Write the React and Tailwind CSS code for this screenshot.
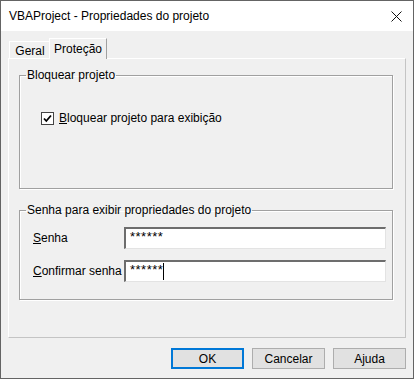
import React from 'react';

const font = { fontFamily: '"Liberation Sans", Arial, sans-serif' };

const Input = ({ value, caret }) => (
  <div className="w-[262px] h-[22px] bg-white border-t-2 border-l-2 border-t-[#6d6d6d] border-l-[#6d6d6d] border-r border-b border-r-[#e3e3e3] border-b-[#e3e3e3] flex items-start pl-[4px] pt-[1px]">
    <span className="text-[13px] leading-[13px] tracking-[0.5px] text-black">{value}</span>
    {caret && <span className="ml-[0px] w-px h-[17px] bg-black" />}
  </div>
);

const Button = ({ children, primary }) => (
  <button
    className={
      'w-[73px] h-[21px] bg-[#e1e1e1] text-[12px] text-black flex items-center justify-center ' +
      (primary ? 'border-2 border-[#0078d7]' : 'border border-[#adadad]')
    }
  >
    {children}
  </button>
);

export default function App() {
  return (
    <div
      className="w-[414px] h-[379px] border border-[#646464] bg-[#f0f0f0] flex flex-col text-[12px] text-black select-none"
      style={font}
    >
      {/* title bar */}
      <div className="h-[30px] bg-white flex items-center justify-between pl-[8px] pr-[11px] shrink-0">
        <span className="text-[12px]">VBAProject - Propriedades do projeto</span>
        <svg width="11" height="11" viewBox="0 0 11 11">
          <path d="M0.5 0.5 L10.5 10.5 M10.5 0.5 L0.5 10.5" stroke="#111" strokeWidth="1" />
        </svg>
      </div>

      {/* body */}
      <div className="flex-1 flex flex-col pl-[7px] pr-[7px] pt-[7px]">
        {/* tabs */}
        <div className="flex items-end h-[20px] pl-[1px] relative z-10">
          <div className="h-[17px] w-[41px] border-t border-l border-white bg-[#f0f0f0] flex items-center justify-center pt-[1px] text-[12px]">
            Geral
          </div>
          <div className="h-[21px] w-[58px] -ml-px border-t border-l border-r border-white border-r-[#a0a0a0] bg-[#f0f0f0] flex items-start justify-center pt-[1px] text-[12px] -mb-px">
            Proteção
          </div>
        </div>

        {/* panel */}
        <div className="w-[398px] h-[280px] border border-white border-r-[#c4c4c4] border-b-[#c4c4c4] flex flex-col pl-[10px] pt-[9px]">
          <fieldset className="w-[374px] h-[121px] border border-[#a0a0a0] shadow-[1px_1px_0_#fff,inset_1px_1px_0_#fff] p-0">
            <legend className="ml-[6px] px-[1px] leading-[14px]">Bloquear projeto</legend>
            <label className="flex items-center gap-[5px] ml-[21px] mt-[27px]">
              <span className="w-[13px] h-[13px] bg-white border border-[#444] flex items-center justify-center">
                <svg width="9" height="9" viewBox="0 0 9 9">
                  <path d="M1 4.5 L3.3 7 L8 1.5" stroke="#000" strokeWidth="1.8" fill="none" />
                </svg>
              </span>
              <span>
                <span className="underline">B</span>loquear projeto para exibição
              </span>
            </label>
          </fieldset>

          <fieldset className="mt-[14px] w-[374px] h-[97px] border border-[#a0a0a0] shadow-[1px_1px_0_#fff,inset_1px_1px_0_#fff] p-0">
            <legend className="ml-[6px] px-[1px] leading-[14px]">Senha para exibir propriedades do projeto</legend>
            <div className="flex flex-col gap-[11px] ml-[13px] mt-[10px]">
              <div className="flex items-center">
                <span className="w-[91px]">
                  <span className="underline">S</span>enha
                </span>
                <Input value="******" />
              </div>
              <div className="flex items-center">
                <span className="w-[91px]">
                  <span className="underline">C</span>onfirmar senha
                </span>
                <Input value="******" caret />
              </div>
            </div>
          </fieldset>
        </div>

        {/* buttons */}
        <div className="flex justify-end gap-[8px] mt-[10px]">
          <Button primary>OK</Button>
          <Button>Cancelar</Button>
          <Button>Ajuda</Button>
        </div>
      </div>
    </div>
  );
}
